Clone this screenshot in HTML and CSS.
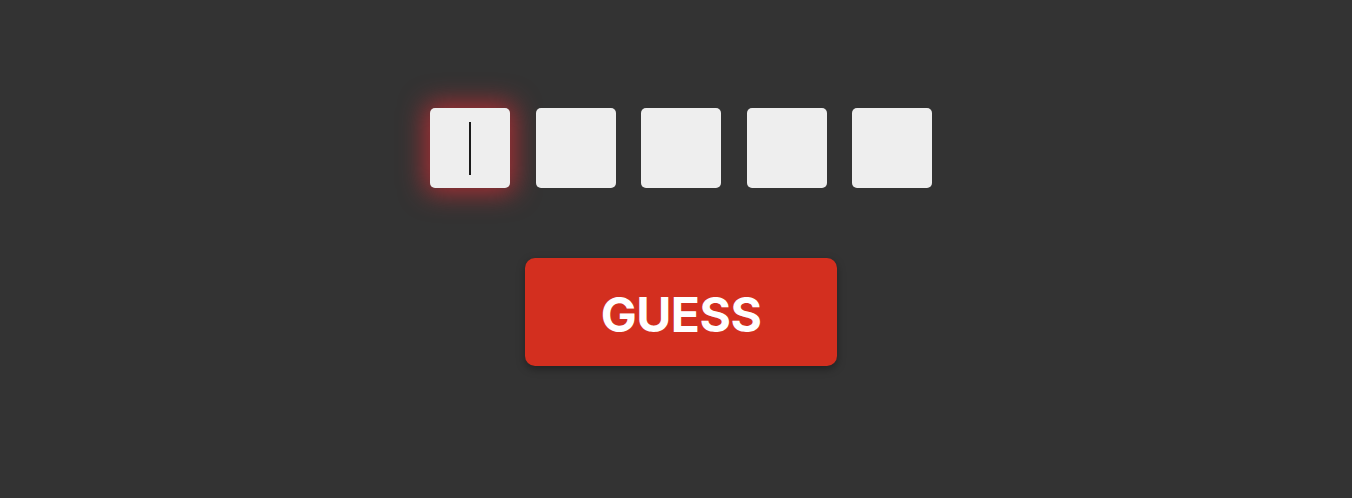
FILE: index.html
```html
<!DOCTYPE html>
<html>
<head>
<meta charset="utf-8">
<link rel="stylesheet" href="styles.css">
</head>
<body>
<main class="game">
  <div class="tiles">
    <div class="tile tile-active"><span class="caret"></span></div>
    <div class="tile"></div>
    <div class="tile"></div>
    <div class="tile"></div>
    <div class="tile"></div>
  </div>
  <button class="guess">GUESS</button>
</main>
</body>
</html>
```
FILE: styles.css
```css
html, body {
  margin: 0;
  padding: 0;
  background: #333333;
  height: 100%;
}
.game {
  display: flex;
  flex-direction: column;
  align-items: center;
  padding-top: 108px;
  padding-left: 10px;
  gap: 70px;
  font-family: Inter, "Liberation Sans", sans-serif;
}
.tiles {
  display: flex;
  gap: 25.5px;
}
.tile {
  width: 80px;
  height: 80px;
  background: #eeeeee;
  border-radius: 5px;
  display: flex;
  align-items: center;
  justify-content: center;
}
.tile-active {
  box-shadow: 0 0 26px 5px rgba(215, 45, 52, 0.72);
}
.caret {
  width: 1.5px;
  height: 53px;
  background: #1a1a1a;
  margin-top: 1px;
}
.guess {
  width: 312px;
  height: 108px;
  border: none;
  border-radius: 10px;
  background: #d32f1f;
  color: #ffffff;
  font-family: Inter, "Liberation Sans", sans-serif;
  font-weight: 700;
  font-size: 48px;
  letter-spacing: -0.5px;
  box-shadow: 0 3px 8px rgba(0, 0, 0, 0.35);
  padding: 4px 0 0;
}
```
